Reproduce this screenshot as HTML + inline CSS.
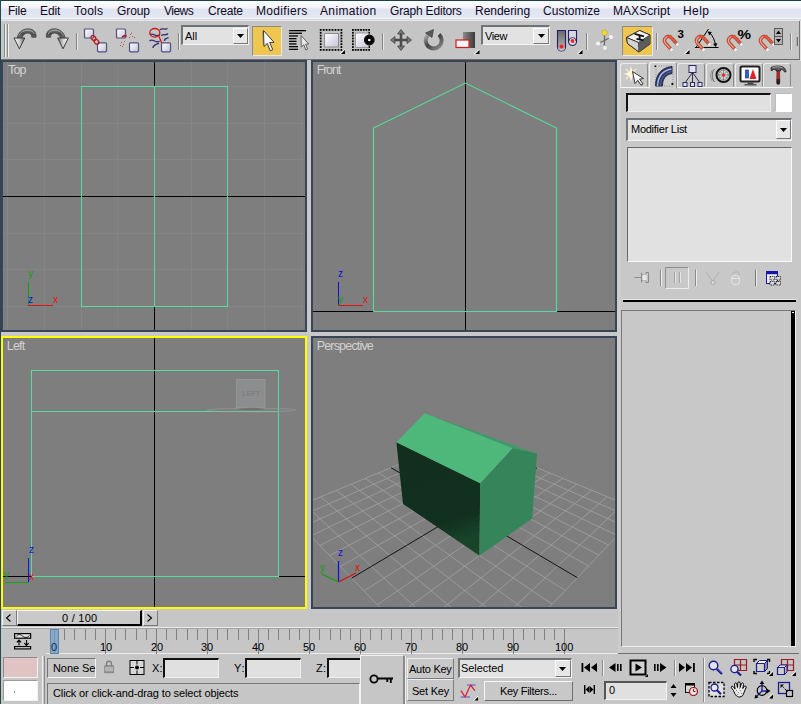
<!DOCTYPE html>
<html lang="en"><head><meta charset="utf-8"><title>Untitled - Autodesk 3ds Max</title>
<style>
html,body{margin:0;padding:0}
body{width:801px;height:704px;position:relative;overflow:hidden;background:#c6c6c6;font-family:"Liberation Sans",sans-serif;font-size:11px;color:#000;line-height:1}
.abs{position:absolute}
div,span{box-sizing:border-box}
#menubar{position:absolute;left:0;top:0;width:801px;height:21px;background:linear-gradient(#1d3f40 0,#1d3f40 1px,#fbfcfe 1px,#f1f3f9 8px,#dfe4f1 9px,#e3e7f3 17px,#eef0f7 18px,#f4f5f9 19px,#b9bcc6 20px,#e4e4e4 21px);}
#menubar span{position:absolute;top:4px;font-size:12px;color:#10081c;white-space:nowrap;line-height:14px}
#edgeL{position:absolute;left:0;top:0;width:1px;height:704px;background:#24484c}
#toolbar{position:absolute;left:1px;top:21px;width:799px;height:39px;background:#c5c5c5;border-right:1px solid #777;border-bottom:1px solid #6a6a6a}
.t{position:absolute;white-space:nowrap;font-size:11px;line-height:13px}
.sunk{position:absolute;background:#e1e1e1;border:1px solid;border-color:#5a5a5a #fff #fff #5a5a5a}
.sunk2{position:absolute;background:#e1e1e1;border:2px solid;border-color:#6b6b6b #f4f4f4 #f4f4f4 #6b6b6b}
.btn{position:absolute;background:#c9c9c9;border:1px solid;border-color:#f6f6f6 #6e6e6e #6e6e6e #f6f6f6}
.vsep{position:absolute;width:2px;border-left:1px solid #8a8a8a;border-right:1px solid #efefef}
.ico{position:absolute;overflow:visible}
.tab{position:absolute;top:63px;width:28px;height:24px;background:#c8c8c8;border:1px solid;border-color:#ececec #8a8a8a #c8c8c8 #ececec;border-radius:3px 3px 0 0}
.tab.act{top:62px;height:27px;background:#cecece;border-color:#f4f4f4 #8a8a8a #cecece #f4f4f4}

#m1{left:7.8px;letter-spacing:-0.25px}
#m2{left:39.8px;letter-spacing:-0.11px}
#m3{left:74.3px;letter-spacing:0.23px}
#m4{left:116.9px;letter-spacing:-0.10px}
#m5{left:164.3px;letter-spacing:-0.51px}
#m6{left:207.4px;letter-spacing:-0.20px}
#m7{left:255.0px;letter-spacing:0.32px}
#m8{left:320.4px;letter-spacing:0.35px}
#m9{left:389.4px;letter-spacing:-0.18px}
#m10{left:474.5px;letter-spacing:-0.04px}
#m11{left:542.4px;letter-spacing:0.03px}
#m12{left:612.0px;letter-spacing:0.05px}
#m13{left:682.3px;letter-spacing:0.45px}
#tall{left:184.8px;letter-spacing:0.00px}
#tview{left:485.4px;letter-spacing:-0.39px}
#tmod{left:629.8px;letter-spacing:-0.26px}
#tframe{left:62.2px;letter-spacing:0.25px}
#tnone{left:52.9px;letter-spacing:-0.07px}
#tX{left:151.5px;letter-spacing:0.04px}
#tY{left:233.3px;letter-spacing:0.79px}
#tZ{left:315.7px;letter-spacing:0.35px}
#tprompt{left:53.0px;letter-spacing:-0.13px}
#tauto{left:409.1px;letter-spacing:-0.26px}
#tset{left:411.8px;letter-spacing:-0.22px}
#tsel{left:461.1px;letter-spacing:-0.06px}
#tkf{left:500.0px;letter-spacing:-0.30px}
#tf0{left:608.4px;letter-spacing:0.00px}
#vTop{letter-spacing:-0.76px;transform:translateX(-0.1px)}
#vFront{letter-spacing:-1.19px;transform:translateX(-1.3px)}
#vLeft{letter-spacing:-0.85px;transform:translateX(-1.2px)}
#vPersp{letter-spacing:-0.82px;transform:translateX(-1.3px)}
</style></head>
<body>
<div id="menubar">
<span id="m1" style="left:8px">File</span><span id="m2" style="left:40px">Edit</span><span id="m3" style="left:74px">Tools</span><span id="m4" style="left:117px">Group</span><span id="m5" style="left:164px">Views</span><span id="m6" style="left:208px">Create</span><span id="m7" style="left:256px">Modifiers</span><span id="m8" style="left:320px">Animation</span><span id="m9" style="left:390px">Graph Editors</span><span id="m10" style="left:475px">Rendering</span><span id="m11" style="left:543px">Customize</span><span id="m12" style="left:613px">MAXScript</span><span id="m13" style="left:683px">Help</span>
</div>
<div id="toolbar"></div>
<div class="abs" style="left:1px;top:20px;width:799px;height:1px;background:#e6e6e6"></div>
<div class="abs" style="left:252px;top:26px;width:30px;height:30px;background:#efc64e;border:1px solid;border-color:#8a8a8a #e8e8e8 #e8e8e8 #8a8a8a"></div>
<div class="abs" style="left:622px;top:26px;width:31px;height:30px;background:#efc64e;border:1px solid;border-color:#8a8a8a #e8e8e8 #e8e8e8 #8a8a8a"></div>
<div class="sunk2" style="left:181px;top:25px;width:68px;height:20px;background:#e2e2e2;border-width:2px 1px 1px 2px;border-color:#6e7478 #f4f4f4 #f4f4f4 #6e7478"></div>
<div class="t" id="tall" style="left:185px;top:30px">All</div>
<div class="btn" style="left:233px;top:28px;width:15px;height:16px;background:#e8e8e8;border-color:#fff #777 #777 #fff"></div>
<svg class="ico" style="left:237px;top:34px" width="7" height="4"><path d="M0 0 H7 L3.500 4 Z" fill="#000"/></svg>
<div class="sunk2" style="left:481px;top:25px;width:69px;height:20px;background:#e2e2e2;border-width:2px 1px 1px 2px;border-color:#6e7478 #f4f4f4 #f4f4f4 #6e7478"></div>
<div class="t" id="tview" style="left:485px;top:30px">View</div>
<div class="btn" style="left:533px;top:28px;width:16px;height:16px;background:#e8e8e8;border-color:#fff #777 #777 #fff"></div>
<svg class="ico" style="left:538px;top:34px" width="7" height="4"><path d="M0 0 H7 L3.500 4 Z" fill="#000"/></svg>
<svg class="ico" style="left:0;top:21px" width="801" height="39" viewBox="0 21 801 39">
<defs>
<linearGradient id="gA" x1="0" y1="0" x2="0" y2="1"><stop offset="0" stop-color="#8a8a8a"/><stop offset="0.5" stop-color="#4a4a4a"/><stop offset="1" stop-color="#6a6a6a"/></linearGradient>
<linearGradient id="gH" x1="0" y1="0" x2="1" y2="0"><stop offset="0" stop-color="#f8f8f8"/><stop offset="0.5" stop-color="#d0d0d0"/><stop offset="1" stop-color="#606060"/></linearGradient>
<linearGradient id="gH2" x1="1" y1="0" x2="0" y2="0"><stop offset="0" stop-color="#f8f8f8"/><stop offset="0.5" stop-color="#d0d0d0"/><stop offset="1" stop-color="#606060"/></linearGradient>
<linearGradient id="gSq" x1="0" y1="0" x2="1" y2="1"><stop offset="0" stop-color="#ffffff"/><stop offset="1" stop-color="#c4c4dc"/></linearGradient>
<linearGradient id="gDk" x1="0" y1="0" x2="1" y2="0"><stop offset="0" stop-color="#8a8a8a"/><stop offset="1" stop-color="#3a3a3a"/></linearGradient>
<linearGradient id="gPv" x1="0" y1="0" x2="0" y2="1"><stop offset="0" stop-color="#6a6a6a"/><stop offset="1" stop-color="#b8b8b8"/></linearGradient>
<linearGradient id="gRot" x1="0" y1="0" x2="1" y2="1"><stop offset="0" stop-color="#b0b0b0"/><stop offset="0.45" stop-color="#404040"/><stop offset="1" stop-color="#909090"/></linearGradient>
<g id="sq"><rect x="0.5" y="0.5" width="9" height="9" rx="1" fill="url(#gSq)" stroke="#50507c" stroke-width="1.2"/></g>
<g id="mag">
 <path d="M-5.400 8 V0 A5.400 5.400 0 0 1 5.400 0 V8 H2.600 V0 A2.600 2.600 0 0 0 -2.600 0 V8 Z" fill="#e4583a" stroke="#a03a28" stroke-width="0.700"/>
 <path d="M-4.100 6 V0 A4.100 4.100 0 0 1 1.500 -3.800" fill="none" stroke="#f6a48c" stroke-width="1.100"/>
 <rect x="-5.500" y="7.600" width="3.100" height="2.600" fill="#fff" stroke="#999" stroke-width="0.400"/><rect x="2.400" y="7.600" width="3.100" height="2.600" fill="#fff" stroke="#999" stroke-width="0.400"/>
</g>
<g id="fly"><path d="M0 4 H4 V0 Z" fill="#000"/><path d="M-1.200 4 L3.500 -0.700" stroke="#fff" stroke-width="0.900"/></g>
<g id="vs"><rect x="0" y="0" width="1" height="17" fill="#848484"/><rect x="1" y="0" width="1" height="17" fill="#e8e8e8"/></g>
</defs>
<rect x="4" y="24" width="1" height="33" fill="#8a8a8a"/><rect x="5" y="24" width="1" height="33" fill="#efefef"/><rect x="7" y="24" width="1" height="33" fill="#8a8a8a"/><rect x="8" y="24" width="1" height="33" fill="#efefef"/>
<g><path d="M36 37.300 C36.800 31 32 28.600 27.500 28.800 C22 29.100 17.800 33 17.200 38.500 L22 38.500 C22.500 35.500 24.500 33.300 27.500 33.100 C30.500 33 31.800 34.800 31.800 37.300 Z" fill="url(#gA)" stroke="#3c3c3c" stroke-width="0.700"/><path d="M19 35.500 C20.500 32 23.500 30.300 27.500 30.300 C31 30.300 33.500 31.500 34.300 34" fill="none" stroke="#a4a4a4" stroke-width="1"/><path d="M14 38 L24.800 38 L19.400 48.800 Z" fill="url(#gH)" stroke="#3c3c3c" stroke-width="1" stroke-linejoin="round"/></g>
<g transform="translate(82.400 0) scale(-1 1)"><path d="M36 37.300 C36.800 31 32 28.600 27.500 28.800 C22 29.100 17.800 33 17.200 38.500 L22 38.500 C22.500 35.500 24.500 33.300 27.500 33.100 C30.500 33 31.800 34.800 31.800 37.300 Z" fill="url(#gA)" stroke="#3c3c3c" stroke-width="0.700"/><path d="M19 35.500 C20.500 32 23.500 30.300 27.500 30.300 C31 30.300 33.500 31.500 34.300 34" fill="none" stroke="#a4a4a4" stroke-width="1"/><path d="M14 38 L24.800 38 L19.400 48.800 Z" fill="url(#gH)" stroke="#3c3c3c" stroke-width="1" stroke-linejoin="round"/></g>
<use href="#vs" x="76" y="33"/>
<use href="#sq" x="84" y="28.500"/><use href="#sq" x="97" y="42.300"/>
<g fill="none" stroke="#c01820" stroke-width="1.300"><ellipse cx="93.500" cy="38" rx="2" ry="2.800" transform="rotate(-40 93.500 38)"/><ellipse cx="96.500" cy="41.800" rx="2" ry="2.800" transform="rotate(-40 96.500 41.800)"/></g>
<use href="#sq" x="116" y="28.500"/><use href="#sq" x="129" y="42.300"/>
<path d="M122.500 37.500 A2.300 2.300 0 0 1 126.500 36.500" fill="none" stroke="#b01820" stroke-width="1.800"/>
<g fill="#c05050"><rect x="130" y="34" width="1" height="1"/><rect x="132" y="36" width="1" height="1"/><rect x="129" y="37" width="1" height="1"/><rect x="134" y="37" width="1" height="1"/><rect x="131" y="32.500" width="1" height="1"/><rect x="121" y="42" width="1" height="1"/><rect x="123" y="44" width="1" height="1"/><rect x="120" y="45" width="1" height="1"/><rect x="124" y="41" width="1" height="1"/><rect x="122" y="46" width="1" height="1"/></g>
<g fill="none" stroke="#303070" stroke-width="1.300"><path d="M150 35 C153 31.500 156 38.500 160 34.500"/><path d="M149.500 41 C153 37.500 156 44.500 159.500 41"/><path d="M153 48 C153 44 157 45 159 43"/><path d="M160 30 C161 27 165 30.500 167.500 28.500"/><path d="M161.500 36 C162 33 165.500 36.500 168 33.500"/><path d="M164.500 41 C164 38 167 39 168.500 37.500"/></g>
<ellipse cx="154.800" cy="32.800" rx="5" ry="4.300" fill="none" stroke="#d01818" stroke-width="1.300"/><path d="M158.500 35.500 C160 38 160.500 41 162 43.500" fill="none" stroke="#d01818" stroke-width="1.300"/>
<use href="#sq" x="161" y="42.300"/>
<use href="#vs" x="178" y="33"/>
<path d="M262.300 31 L262.800 45 L265 43.500 L263.500 31.500 Z" fill="#777" opacity="0.800"/>
<path d="M263.500 30.500 L264 46.500 L267.300 43.300 L270.200 50.800 L272.800 49.700 L269.700 42.500 L274 42.300 Z" fill="#fff" stroke="#3a3a3a" stroke-width="1" stroke-linejoin="round"/>
<rect x="289" y="30" width="17" height="1.300" fill="#000"/>
<rect x="289" y="32.6" width="13" height="1.300" fill="#000"/>
<rect x="289" y="35.3" width="9" height="1.300" fill="#000"/>
<rect x="289" y="38" width="7.5" height="1.300" fill="#000"/>
<rect x="289" y="40.7" width="7.5" height="1.300" fill="#000"/>
<rect x="289" y="43.3" width="7.5" height="1.300" fill="#000"/>
<rect x="289" y="46" width="9" height="1.300" fill="#000"/>
<rect x="289" y="48.7" width="9" height="1.300" fill="#000"/>
<path d="M301 35.500 L301.300 47 L303.800 44.800 L305.800 50 L307.600 49.200 L305.600 44.200 L308.800 44 Z" fill="#e8e8e8" stroke="#555" stroke-width="0.900" stroke-linejoin="round"/>
<g fill="#000"><rect x="319.80" y="29.00" width="1.8" height="1.8"/><rect x="319.80" y="49.00" width="1.8" height="1.8"/><rect x="322.76" y="29.00" width="1.8" height="1.8"/><rect x="322.76" y="49.00" width="1.8" height="1.8"/><rect x="325.71" y="29.00" width="1.8" height="1.8"/><rect x="325.71" y="49.00" width="1.8" height="1.8"/><rect x="328.67" y="29.00" width="1.8" height="1.8"/><rect x="328.67" y="49.00" width="1.8" height="1.8"/><rect x="331.63" y="29.00" width="1.8" height="1.8"/><rect x="331.63" y="49.00" width="1.8" height="1.8"/><rect x="334.59" y="29.00" width="1.8" height="1.8"/><rect x="334.59" y="49.00" width="1.8" height="1.8"/><rect x="337.54" y="29.00" width="1.8" height="1.8"/><rect x="337.54" y="49.00" width="1.8" height="1.8"/><rect x="340.50" y="29.00" width="1.8" height="1.8"/><rect x="340.50" y="49.00" width="1.8" height="1.8"/><rect x="319.80" y="31.86" width="1.8" height="1.8"/><rect x="340.50" y="31.86" width="1.8" height="1.8"/><rect x="319.80" y="34.71" width="1.8" height="1.8"/><rect x="340.50" y="34.71" width="1.8" height="1.8"/><rect x="319.80" y="37.57" width="1.8" height="1.8"/><rect x="340.50" y="37.57" width="1.8" height="1.8"/><rect x="319.80" y="40.43" width="1.8" height="1.8"/><rect x="340.50" y="40.43" width="1.8" height="1.8"/><rect x="319.80" y="43.29" width="1.8" height="1.8"/><rect x="340.50" y="43.29" width="1.8" height="1.8"/><rect x="319.80" y="46.14" width="1.8" height="1.8"/><rect x="340.50" y="46.14" width="1.8" height="1.8"/></g>
<rect x="324.500" y="33.500" width="14" height="13.500" fill="url(#gSq)" stroke="#8a8a8a" stroke-width="1"/>
<use href="#fly" x="341" y="50"/>
<g fill="#000"><rect x="352.00" y="29.00" width="1.8" height="1.8"/><rect x="352.00" y="49.00" width="1.8" height="1.8"/><rect x="354.70" y="29.00" width="1.8" height="1.8"/><rect x="354.70" y="49.00" width="1.8" height="1.8"/><rect x="357.40" y="29.00" width="1.8" height="1.8"/><rect x="357.40" y="49.00" width="1.8" height="1.8"/><rect x="360.10" y="29.00" width="1.8" height="1.8"/><rect x="360.10" y="49.00" width="1.8" height="1.8"/><rect x="362.80" y="29.00" width="1.8" height="1.8"/><rect x="362.80" y="49.00" width="1.8" height="1.8"/><rect x="365.50" y="29.00" width="1.8" height="1.8"/><rect x="365.50" y="49.00" width="1.8" height="1.8"/><rect x="368.20" y="29.00" width="1.8" height="1.8"/><rect x="368.20" y="49.00" width="1.8" height="1.8"/><rect x="352.00" y="31.86" width="1.8" height="1.8"/><rect x="368.20" y="31.86" width="1.8" height="1.8"/><rect x="352.00" y="34.71" width="1.8" height="1.8"/><rect x="368.20" y="34.71" width="1.8" height="1.8"/><rect x="352.00" y="37.57" width="1.8" height="1.8"/><rect x="368.20" y="37.57" width="1.8" height="1.8"/><rect x="352.00" y="40.43" width="1.8" height="1.8"/><rect x="368.20" y="40.43" width="1.8" height="1.8"/><rect x="352.00" y="43.29" width="1.8" height="1.8"/><rect x="368.20" y="43.29" width="1.8" height="1.8"/><rect x="352.00" y="46.14" width="1.8" height="1.8"/><rect x="368.20" y="46.14" width="1.8" height="1.8"/></g>
<rect x="355.500" y="33" width="13" height="14.500" fill="url(#gSq)" stroke="#8a8a8a" stroke-width="0.800"/>
<circle cx="369.300" cy="40" r="4.600" fill="#000" stroke="#111" stroke-width="1.600"/><circle cx="369.300" cy="40" r="1.300" fill="#fff"/>
<use href="#vs" x="382" y="33"/>
<g fill="#787878" stroke="#454545" stroke-width="0.800"><path d="M401 29.500 L404.500 34 H397.500 Z M401 50.500 L404.500 46 H397.500 Z M390.500 40 L395 36.500 V43.500 Z M411.500 40 L407 36.500 V43.500 Z"/></g><path d="M401 33.500 V46.500 M394.500 40 H407.500" stroke="#4c4c4c" stroke-width="2.600"/>
<path d="M428 34.800 A8 8 0 1 0 439 34.500" fill="none" stroke="url(#gRot)" stroke-width="4"/>
<path d="M425.500 33 L433.500 29.500 L432 37.500 Z" fill="#5a5a5a" stroke="#333" stroke-width="0.600"/>
<rect x="463" y="32" width="12" height="16" fill="url(#gDk)"/>
<rect x="456" y="40" width="13" height="7.500" fill="#f4f4fa" stroke="#d81818" stroke-width="1.200"/>
<use href="#fly" x="475.500" y="50"/>
<path d="M557.500 30.500 H565.500 V47 A4 4 0 0 1 557.500 47 Z" fill="url(#gPv)" stroke="#20206c" stroke-width="1.100"/><circle cx="561.500" cy="46.500" r="2" fill="#ff2020"/>
<path d="M558 48.500 A4.300 4.300 0 0 0 565 48.500" fill="none" stroke="#e8e8e8" stroke-width="0.800"/>
<path d="M568.500 30.500 H576.500 V41.500 A4 4 0 0 1 568.500 41.500 Z" fill="#d8d8e0" stroke="#20206c" stroke-width="1.100"/><path d="M569 41 A3.500 3.500 0 0 1 576 41" fill="none" stroke="#20206c" stroke-width="0.800"/><circle cx="572.500" cy="41" r="1.900" fill="#ff2020"/>
<use href="#fly" x="578.500" y="50"/>
<use href="#vs" x="586" y="33"/>
<path d="M604.500 33 V47.500 M611 37 L604.500 40.500 L598 43.500" stroke="#666" stroke-width="1.200" fill="none"/>
<circle cx="604.500" cy="32.800" r="2.700" fill="#f0d838" stroke="#b8a020" stroke-width="0.500"/><circle cx="611" cy="37" r="2.500" fill="#f4f4f4" stroke="#aaa" stroke-width="0.500"/><circle cx="598" cy="43.500" r="2.500" fill="#f4f4f4" stroke="#aaa" stroke-width="0.500"/><circle cx="605" cy="48" r="2.500" fill="#f0f0f0" stroke="#aaa" stroke-width="0.500"/>
<path d="M626.500 37.500 L639.500 30.500 L650 35 L650 44 L639 52 L627.500 43.500 Z" fill="#555" stroke="#222" stroke-width="1"/>
<path d="M626.500 37.500 L639.500 30.500 L650 35 L638.500 42.500 Z" fill="#f4f4f4" stroke="#222" stroke-width="0.800"/>
<path d="M626.500 37.500 L638.500 42.500 L639 52 L627.500 43.500 Z" fill="#d4d4d4" stroke="#222" stroke-width="0.800"/>
<path d="M638.500 42.500 L650 35 L650 44 L639 52 Z" fill="#5c5c5c"/>
<path d="M634.500 33.800 L644 36.300 M639.300 35 L640 39.500 M636.500 38.800 L643.500 40.300" stroke="#111" stroke-width="1.800" fill="none"/>
<use href="#vs" x="656" y="33"/>
<use href="#mag" transform="translate(668.500 40.500) rotate(-42)"/>
<text x="677.500" y="37.500" font-family="Liberation Sans, sans-serif" font-weight="bold" font-size="11.500" fill="#000">3</text>
<use href="#fly" x="685.500" y="50"/>
<path d="M695 47.500 H718.500 M696 47.500 L708.500 29" stroke="#000" stroke-width="1" fill="none"/><path d="M709.500 32.500 C713 36 715 41 715.500 45.500" stroke="#000" stroke-width="1" fill="none"/><path d="M707.500 31.500 L711.800 32 L709.500 35.500 Z M715.800 47.300 L713 43.800 L717.300 43.300 Z" fill="#000"/>
<use href="#mag" transform="translate(700.500 40.500) rotate(-42)"/>
<use href="#mag" transform="translate(732.500 40.500) rotate(-42)"/>
<text x="737.500" y="38.800" font-family="Liberation Sans, sans-serif" font-weight="bold" font-size="13.500" fill="#000" textLength="13.500" lengthAdjust="spacingAndGlyphs">%</text>
<use href="#mag" transform="translate(764.500 40.500) rotate(-42)"/>
<rect x="774" y="28" width="9" height="17" fill="#5a5a5a"/><rect x="775" y="29" width="7" height="7" fill="#b4b4b4"/><rect x="775" y="37" width="7" height="7" fill="#b4b4b4"/><path d="M778.500 30.500 L781 34 H776 Z M778.500 42.500 L781 39 H776 Z" fill="#000"/>
<use href="#vs" x="790" y="33"/>
<path d="M797.300 37 V46" stroke="#555" stroke-width="1"/>
</svg>
<div id="edgeL"></div>
<svg class="abs" id="viewports" style="left:0;top:59px" width="619" height="551" viewBox="0 59 619 551" shape-rendering="crispEdges">
<rect x="0" y="59" width="619" height="551" fill="#c8c8c8"/>
<rect x="0" y="59" width="1" height="551" fill="#2b4650"/>
<rect x="1" y="59" width="618" height="1" fill="#707070"/>
<rect x="1" y="60" width="306" height="272" fill="#384557"/>
<rect x="3" y="62" width="302" height="268" fill="#7e7e7e"/>
<rect x="311" y="60" width="306" height="272" fill="#384557"/>
<rect x="313" y="62" width="302" height="268" fill="#7e7e7e"/>
<rect x="1" y="336" width="306" height="273" fill="#ffff00"/>
<rect x="3" y="338" width="302" height="269" fill="#7e7e7e"/>
<rect x="311" y="336" width="306" height="273" fill="#384557"/>
<rect x="313" y="338" width="302" height="269" fill="#7e7e7e"/>
<rect x="7" y="62" width="1" height="268" fill="#858585"/>
<rect x="44" y="62" width="1" height="268" fill="#858585"/>
<rect x="81" y="62" width="1" height="268" fill="#858585"/>
<rect x="117" y="62" width="1" height="268" fill="#858585"/>
<rect x="191" y="62" width="1" height="268" fill="#858585"/>
<rect x="227" y="62" width="1" height="268" fill="#858585"/>
<rect x="264" y="62" width="1" height="268" fill="#858585"/>
<rect x="301" y="62" width="1" height="268" fill="#858585"/>
<rect x="3" y="86" width="302" height="1" fill="#858585"/>
<rect x="3" y="123" width="302" height="1" fill="#858585"/>
<rect x="3" y="159" width="302" height="1" fill="#858585"/>
<rect x="3" y="233" width="302" height="1" fill="#858585"/>
<rect x="3" y="269" width="302" height="1" fill="#858585"/>
<rect x="3" y="306" width="302" height="1" fill="#858585"/>
<rect x="3" y="196" width="302" height="1" fill="#000"/>
<rect x="154" y="62" width="1" height="268" fill="#000"/>
<rect x="81.5" y="86.5" width="146" height="220" fill="none" stroke="#56dd9c" stroke-width="1"/>
<rect x="154" y="86" width="1" height="221" fill="#56dd9c"/>
<rect x="313" y="311" width="302" height="1" fill="#000"/>
<rect x="465" y="62" width="1" height="268" fill="#000"/>
<polyline points="373.5,311.5 373.5,128 465.5,83 556.5,128 556.5,311.5 373.5,311.5" fill="none" stroke="#56dd9c" stroke-width="1.1" shape-rendering="auto"/>
<rect x="3" y="576" width="302" height="1" fill="#000"/>
<rect x="154" y="338" width="1" height="269" fill="#000"/>
<rect x="31.5" y="370.5" width="247" height="206" fill="none" stroke="#56dd9c" stroke-width="1"/>
<rect x="31" y="411" width="248" height="1" fill="#56dd9c"/>
<g shape-rendering="auto"><ellipse cx="251.5" cy="410" rx="45" ry="1.8" fill="none" stroke="#9c9c9c" stroke-width="1.1" opacity="0.55"/><rect x="236.5" y="379.5" width="28.5" height="28" fill="#8b8d8f" stroke="#929496" stroke-width="1"/><ellipse cx="251" cy="409" rx="13" ry="1.2" fill="#6a6a6a" opacity="0.7"/><text x="251" y="396" font-family="Liberation Sans, sans-serif" font-size="7" fill="#7d7f81" text-anchor="middle" font-weight="bold">LEFT</text></g>
<defs><clipPath id="pclip"><rect x="313" y="338" width="302" height="269"/></clipPath><linearGradient id="darkwall" x1="0" y1="0" x2="0.25" y2="1"><stop offset="0" stop-color="#112e1e"/><stop offset="0.8" stop-color="#12301f"/><stop offset="1" stop-color="#184429"/></linearGradient></defs>
<g clip-path="url(#pclip)"><g shape-rendering="auto" stroke="#9f9f9f" stroke-width="0.85" fill="none"><line x1="465.4" y1="695.3" x2="286.4" y2="511.1"/><line x1="465.4" y1="695.3" x2="641.1" y2="510.8"/><line x1="486.4" y1="673.3" x2="304.0" y2="503.8"/><line x1="444.2" y1="673.5" x2="623.6" y2="503.6"/><line x1="505.3" y1="653.5" x2="320.6" y2="496.9"/><line x1="425.1" y1="653.8" x2="607.1" y2="496.8"/><line x1="522.4" y1="635.5" x2="336.3" y2="490.4"/><line x1="407.7" y1="635.9" x2="591.5" y2="490.3"/><line x1="538.0" y1="619.1" x2="351.1" y2="484.3"/><line x1="391.8" y1="619.6" x2="576.8" y2="484.2"/><line x1="552.2" y1="604.1" x2="365.1" y2="478.4"/><line x1="377.3" y1="604.6" x2="562.8" y2="478.4"/><line x1="565.3" y1="590.4" x2="378.4" y2="472.9"/><line x1="363.9" y1="590.9" x2="549.6" y2="472.9"/><line x1="588.6" y1="566.0" x2="403.0" y2="462.7"/><line x1="340.2" y1="566.5" x2="525.0" y2="462.7"/><line x1="598.9" y1="555.1" x2="414.4" y2="458.0"/><line x1="329.6" y1="555.6" x2="513.6" y2="458.0"/><line x1="608.5" y1="545.0" x2="425.2" y2="453.5"/><line x1="319.8" y1="545.5" x2="502.8" y2="453.5"/><line x1="617.5" y1="535.6" x2="435.6" y2="449.2"/><line x1="310.6" y1="536.0" x2="492.4" y2="449.2"/><line x1="625.9" y1="526.8" x2="445.4" y2="445.1"/><line x1="302.0" y1="527.2" x2="482.5" y2="445.1"/><line x1="633.7" y1="518.6" x2="454.9" y2="441.2"/><line x1="293.9" y1="518.9" x2="473.0" y2="441.2"/><line x1="641.1" y1="510.8" x2="463.9" y2="437.4"/><line x1="286.4" y1="511.1" x2="463.9" y2="437.4"/><line x1="577.4" y1="577.7" x2="391.0" y2="467.7" stroke="#000"/><line x1="351.6" y1="578.2" x2="537.0" y2="467.7" stroke="#000"/></g>
<g shape-rendering="auto">
<polygon points="424.7,413.3 537,453.6 512.4,448.3" fill="#3e9a68"/>
<polygon points="396.4,442.3 480.2,483.3 479.5,555.8 403,503.9" fill="url(#darkwall)"/>
<polygon points="480.2,483.3 512.4,448.3 537,453.6 532.2,518.4 479.5,555.8" fill="#36855a"/>
<polygon points="424.7,413.3 396.4,442.3 480.2,483.3 512.4,448.3" fill="#4eb87b"/>
</g></g>
<rect x="28" y="282" width="1" height="24" fill="#10a010"/><rect x="28" y="305" width="25" height="1" fill="#e01010"/>
<g shape-rendering="auto"><text x="28" y="277" font-family="Liberation Sans, sans-serif" font-size="10" fill="#10a010" >y</text><text x="28" y="303" font-family="Liberation Sans, sans-serif" font-size="10" fill="#1010e0" >z</text><text x="53" y="303" font-family="Liberation Sans, sans-serif" font-size="10" fill="#e01010" >x</text></g>
<rect x="338" y="282" width="1" height="24" fill="#1010e0"/><rect x="338" y="305" width="25" height="1" fill="#e01010"/>
<g shape-rendering="auto"><text x="338" y="277" font-family="Liberation Sans, sans-serif" font-size="10" fill="#1010e0" >z</text><text x="338" y="303" font-family="Liberation Sans, sans-serif" font-size="10" fill="#10a010" >y</text><text x="363" y="303" font-family="Liberation Sans, sans-serif" font-size="10" fill="#e01010" >x</text></g>
<rect x="28" y="558" width="1" height="24" fill="#1010e0"/><rect x="5" y="582" width="24" height="1" fill="#10a010"/>
<g shape-rendering="auto"><text x="29" y="553" font-family="Liberation Sans, sans-serif" font-size="10" fill="#1010e0" >z</text><text x="4" y="578" font-family="Liberation Sans, sans-serif" font-size="10" fill="#10a010" >y</text><text x="29" y="580" font-family="Liberation Sans, sans-serif" font-size="10" fill="#e01010" >x</text></g>
<g shape-rendering="auto" stroke-width="1.2"><line x1="338.5" y1="561" x2="338.5" y2="582" stroke="#1010e0"/><line x1="338.5" y1="582" x2="356" y2="573" stroke="#e01010"/><line x1="338.5" y1="582" x2="322" y2="574" stroke="#10a010"/><text x="338" y="556" font-family="Liberation Sans, sans-serif" font-size="10" fill="#1010e0" >z</text><text x="320" y="571" font-family="Liberation Sans, sans-serif" font-size="10" fill="#10a010" >y</text><text x="355" y="571" font-family="Liberation Sans, sans-serif" font-size="10" fill="#e01010" >x</text></g>
<g shape-rendering="auto"><text x="8" y="74" font-family="Liberation Sans, sans-serif" font-size="12.5" fill="#d2d2d2"  id="vTop">Top</text><text x="318" y="74" font-family="Liberation Sans, sans-serif" font-size="12.5" fill="#d2d2d2"  id="vFront">Front</text><text x="8" y="350" font-family="Liberation Sans, sans-serif" font-size="12.5" fill="#d2d2d2"  id="vLeft">Left</text><text x="318" y="350" font-family="Liberation Sans, sans-serif" font-size="12.5" fill="#d2d2d2"  id="vPersp">Perspective</text></g>
</svg>
<div id="cmdpanel" class="abs" style="left:617px;top:60px;width:184px;height:594px;background:#c8c8c8"></div>
<div class="abs" style="left:617px;top:60px;width:4px;height:594px;background:#cdcdcd"></div>
<div class="abs" style="left:800px;top:21px;width:1px;height:40px;background:#e0e0e0"></div>
<!-- tabs -->
<div class="abs" style="left:620px;top:87px;width:173px;height:1px;background:#f4f4f4"></div>
<div class="tab" style="left:620px"></div>
<div class="tab act" style="left:649px"></div>
<div class="tab" style="left:677px"></div>
<div class="tab" style="left:706px"></div>
<div class="tab" style="left:735px"></div>
<div class="tab" style="left:763px"></div>
<svg class="ico" style="left:620px;top:62px" width="173" height="26" viewBox="620 62 173 26">
 <!-- create: star + arrow -->
 <g>
  <path d="M631 66 L632.5 72 L638 74 L632.5 76 L631 82 L629.5 76 L624 74 L629.5 72 Z" fill="#fffbe0" opacity="0.95"/>
  <path d="M626 69 L636 79 M636 69 L626 79" stroke="#fff8d0" stroke-width="1.2" opacity="0.8"/>
  <circle cx="631" cy="74" r="2.5" fill="#fffad0"/>
  <path d="M632.5 71.5 L643.5 78.5 L639.5 79.2 L643 84 L641 85.3 L637.8 80.3 L635 83.5 Z" fill="#fff" stroke="#303030" stroke-width="1" stroke-linejoin="round"/>
 </g>
 <!-- modify: pipe -->
 <g>
  <path d="M656 66 h17 v20 h-17 z" fill="none" stroke="#555" stroke-width="0.6" stroke-dasharray="1 1.5"/>
  <path d="M657 88 C657 76 663 70 672 69" fill="none" stroke="#1d2748" stroke-width="0" />
  <path d="M655.5 86 C655.5 75 661 67.5 672 66.5 L672 73.5 C666 74.5 662.5 78.5 662.5 86 Z" fill="#303a62" stroke="#151c38" stroke-width="0.8"/>
  <path d="M657.5 86 C658 77 662 70.5 671.5 69" fill="none" stroke="#a8b8e8" stroke-width="1.6"/>
  <path d="M660.3 86 C660.8 79 664 73 671.8 71.6" fill="none" stroke="#5868a8" stroke-width="1"/>
  <rect x="654.5" y="65.5" width="1.5" height="1.5" fill="#000"/><rect x="671.5" y="83" width="1.8" height="1.8" fill="#000"/>
 </g>
 <!-- hierarchy -->
 <g stroke="#2c2c60" stroke-width="1" fill="#e0e0f4">
  <path d="M692.500 72 V83 M692 73 L685 83 M693 73 L700 83" fill="none" stroke="#202040" stroke-width="0.9"/>
  <rect x="689" y="65.500" width="7" height="7"/>
  <rect x="683" y="82.500" width="4" height="4"/>
  <rect x="690.500" y="82.500" width="4" height="4"/>
  <rect x="698" y="82.500" width="4" height="4"/>
 </g>
 <!-- motion wheel -->
 <g fill="none">
  <path d="M714.500 69 C711.500 72 711.500 79 714.500 82" stroke="#666" stroke-width="1"/>
  <path d="M712.300 70 C710 73 710 78 712.300 81" stroke="#888" stroke-width="0.8"/>
  <circle cx="723.500" cy="75" r="7" stroke="#111" stroke-width="2" fill="#d8d8d8"/>
  <circle cx="723.500" cy="75" r="4.800" stroke="#777" stroke-width="0.7"/>
  <path d="M723.500 69.500 V80.500 M718 75 H729 M719.600 71.100 L727.400 78.900 M727.400 71.100 L719.600 78.900" stroke="#666" stroke-width="0.7"/>
  <circle cx="723.500" cy="75" r="1.600" fill="#ff2020"/>
 </g>
 <!-- display monitor -->
 <g>
  <rect x="740.500" y="66.500" width="19" height="15" rx="1.500" fill="#fff" stroke="#222" stroke-width="2"/>
  <rect x="745.500" y="70" width="3" height="8" fill="#3060d0" stroke="#102070" stroke-width="0.600"/>
  <path d="M753 69 L756.500 79 H749.500 Z" fill="#e82020"/>
  <rect x="747.500" y="82.500" width="6" height="2" fill="#444"/><rect x="744.500" y="84" width="12" height="1.500" fill="#555"/>
 </g>
 <!-- hammer -->
 <g>
  <path d="M771 67.500 C774 65.500 780 65.500 783 67 C785 68 786 70 786 72 L784.500 72 C784 70 782.500 69.500 780.500 69.500 L780.500 71 L776 71 L776 69.500 L772.500 69.500 L772.500 70.500 L771 70.500 Z" fill="#5a5a5a" stroke="#1a1a1a" stroke-width="0.700"/>
  <path d="M772.500 67.800 C775 66.500 780 66.500 782.500 67.800" fill="none" stroke="#b0b0b0" stroke-width="0.900"/>
  <path d="M777 71 L779.500 71 L779.800 83 C779.800 84.500 776.700 84.500 776.700 83 Z" fill="#c02820" stroke="#401010" stroke-width="0.600"/>
  <path d="M776.900 79 L779.700 79 L779.800 83.500 C779.800 84.800 776.700 84.800 776.700 83.500 Z" fill="#222"/>
 </g>
</svg>
<!-- name field + swatch -->
<div class="sunk2" style="left:626px;top:93px;width:145px;height:19px;border-color:#111 #f0f0f0 #f0f0f0 #111;border-width:2px 1px 1px 2px;background:#e0e0e0"></div>
<div class="abs" style="left:775px;top:93px;width:17px;height:19px;background:#fff;border:1px solid;border-color:#bbb #fff #fff #bbb"></div>
<!-- modifier list -->
<div class="sunk2" style="left:626px;top:118px;width:166px;height:23px;background:#e2e2e2;border-width:2px 1px 1px 2px;border-color:#6e7478 #f4f4f4 #f4f4f4 #6e7478"></div>
<div class="t" id="tmod" style="left:631px;top:123px">Modifier List</div>
<div class="btn" style="left:776px;top:120px;width:15px;height:19px;background:#e6e6e6;border-color:#fff #777 #777 #fff"></div>
<svg class="ico" style="left:780px;top:128px" width="7" height="4"><path d="M0 0 H7 L3.500 4 Z" fill="#000"/></svg>
<!-- stack list -->
<div class="abs" style="left:627px;top:147px;width:165px;height:115px;background:#e1e1e1;border:1px solid;border-color:#666 #fafafa #fafafa #666"></div>
<!-- stack buttons -->
<svg class="ico" style="left:630px;top:266px" width="160" height="24" viewBox="630 266 160 24">
 <g stroke="#8c8c8c" fill="none" stroke-width="1">
  <path d="M634.500 277.500 H641" /><path d="M641.500 272.500 V282.500 M641.500 274.500 H646 V272.500 H648.500 V282.500 H646 V280.500 H641.500" stroke="#8a8a8a"/>
  <rect x="642.5" y="274.500" width="4" height="6" fill="#e8e8e8" stroke="none"/>
  <path d="M660.500 269.500 V286" stroke="#8a8a8a"/><path d="M661.500 269.500 V286" stroke="#eee"/>
  <path d="M665.500 288.500 V267.500 H688.500" stroke="#8e8e8e"/><path d="M665.500 288.500 H688.500 V267.500" stroke="#ececec"/>
  <path d="M674.500 272 V283 M679.500 272 V283" stroke="#a4a4a4"/><path d="M675.500 272 V283 M680.500 272 V283" stroke="#e6e6e6"/>
  <path d="M695.500 269.500 V286" stroke="#8a8a8a"/><path d="M696.500 269.500 V286" stroke="#eee"/>
  <path d="M706.500 272.500 L712.500 281 L719 272.500" stroke="#a0a0a0" stroke-dasharray="1.500 1"/><circle cx="713" cy="282.500" r="2" stroke="#a8a8a8" fill="#ddd"/>
  <path d="M732 274.500 C734 271 739 271 739.500 275" stroke="#b0b0b0"/><rect x="731.500" y="275.500" width="8" height="9" rx="3" stroke="#e4e4e4" fill="#c8c8c8"/><path d="M731.500 278.500 H739.500" stroke="#e4e4e4"/>
  <path d="M755.500 269.500 V286" stroke="#777"/><path d="M756.500 269.500 V286" stroke="#eee"/>
 </g>
 <g>
  <rect x="766.500" y="271.500" width="11" height="12" fill="#ececf4" stroke="#1818a8" stroke-width="1"/>
  <rect x="766" y="271" width="12" height="3.200" fill="#1414a8"/>
  <g fill="#dcdcdc" stroke="#111" stroke-width="0.900" stroke-dasharray="1.200 0.900"><rect x="770" y="276.500" width="4.500" height="3.500"/><rect x="776" y="276.500" width="4.500" height="3.500"/><rect x="770" y="281.500" width="4.500" height="3.500"/><rect x="776" y="281.500" width="4.500" height="3.500"/></g>
 </g>
</svg>
<!-- divider -->
<div class="abs" style="left:622px;top:299px;width:175px;height:1px;background:#e6e6e6"></div>
<div class="abs" style="left:623px;top:300px;width:173px;height:2px;background:#000"></div>
<!-- rollout area -->
<div class="abs" style="left:621px;top:310px;width:175px;height:337px;background:#c8c8c8;border:1px solid;border-color:#777 #eee #eee #777"></div>
<div class="abs" style="left:791px;top:311px;width:4px;height:335px;background:#000"></div>
<div class="abs" style="left:792px;top:312px;width:2px;height:1px;background:#fff"></div>
<div id="bottom" class="abs" style="left:1px;top:609px;width:617px;height:95px;background:#c6c6c6"></div>
<div class="abs" style="left:618px;top:654px;width:183px;height:50px;background:#c6c6c6"></div>
<div class="btn" style="left:2px;top:610px;width:15px;height:16px;background:#c8c8c8;border-color:#f0f0f0 #7a7a7a #7a7a7a #f0f0f0"></div>
<div class="abs" style="left:17px;top:610px;width:125px;height:16px;background:#c9c9c9;border:solid;border-width:1px 2px 2px 1px;border-color:#f4f4f4 #000 #000 #f4f4f4"></div>
<div class="btn" style="left:143px;top:610px;width:15px;height:16px;background:#c8c8c8;border-color:#f0f0f0 #7a7a7a #7a7a7a #f0f0f0"></div>
<svg class="ico" style="left:2px;top:609px" width="160" height="17" viewBox="2 609 160 17"><path d="M10.500 614.500 L6.500 618 L10.500 621.500" fill="none" stroke="#000" stroke-width="1.100"/><path d="M147.500 614.500 L151.500 618 L147.500 621.500" fill="none" stroke="#000" stroke-width="1.100"/></svg>
<div class="t" id="tframe" style="left:62px;top:612px">0 / 100</div>
<div class="abs" style="left:1px;top:627px;width:617px;height:1px;background:#e8e8e8"></div>
<div class="abs" style="left:1px;top:628px;width:617px;height:1px;background:#a4a4a4"></div>
<div class="abs" style="left:46px;top:653px;width:572px;height:1px;background:#ececec"></div>
<svg class="ico" style="left:0;top:628px" width="618" height="27" viewBox="0 628 618 27" shape-rendering="crispEdges"><rect x="54" y="629" width="1" height="25" fill="#808080"/><rect x="64" y="629" width="1" height="11" fill="#808080"/><rect x="74" y="629" width="1" height="11" fill="#808080"/><rect x="85" y="629" width="1" height="11" fill="#808080"/><rect x="95" y="629" width="1" height="11" fill="#808080"/><rect x="105" y="629" width="1" height="25" fill="#808080"/><rect x="115" y="629" width="1" height="11" fill="#808080"/><rect x="125" y="629" width="1" height="11" fill="#808080"/><rect x="136" y="629" width="1" height="11" fill="#808080"/><rect x="146" y="629" width="1" height="11" fill="#808080"/><rect x="156" y="629" width="1" height="25" fill="#808080"/><rect x="166" y="629" width="1" height="11" fill="#808080"/><rect x="176" y="629" width="1" height="11" fill="#808080"/><rect x="187" y="629" width="1" height="11" fill="#808080"/><rect x="197" y="629" width="1" height="11" fill="#808080"/><rect x="207" y="629" width="1" height="25" fill="#808080"/><rect x="217" y="629" width="1" height="11" fill="#808080"/><rect x="227" y="629" width="1" height="11" fill="#808080"/><rect x="238" y="629" width="1" height="11" fill="#808080"/><rect x="248" y="629" width="1" height="11" fill="#808080"/><rect x="258" y="629" width="1" height="25" fill="#808080"/><rect x="268" y="629" width="1" height="11" fill="#808080"/><rect x="278" y="629" width="1" height="11" fill="#808080"/><rect x="289" y="629" width="1" height="11" fill="#808080"/><rect x="299" y="629" width="1" height="11" fill="#808080"/><rect x="309" y="629" width="1" height="25" fill="#808080"/><rect x="319" y="629" width="1" height="11" fill="#808080"/><rect x="330" y="629" width="1" height="11" fill="#808080"/><rect x="340" y="629" width="1" height="11" fill="#808080"/><rect x="350" y="629" width="1" height="11" fill="#808080"/><rect x="360" y="629" width="1" height="25" fill="#808080"/><rect x="370" y="629" width="1" height="11" fill="#808080"/><rect x="381" y="629" width="1" height="11" fill="#808080"/><rect x="391" y="629" width="1" height="11" fill="#808080"/><rect x="401" y="629" width="1" height="11" fill="#808080"/><rect x="411" y="629" width="1" height="25" fill="#808080"/><rect x="421" y="629" width="1" height="11" fill="#808080"/><rect x="432" y="629" width="1" height="11" fill="#808080"/><rect x="442" y="629" width="1" height="11" fill="#808080"/><rect x="452" y="629" width="1" height="11" fill="#808080"/><rect x="462" y="629" width="1" height="25" fill="#808080"/><rect x="472" y="629" width="1" height="11" fill="#808080"/><rect x="483" y="629" width="1" height="11" fill="#808080"/><rect x="493" y="629" width="1" height="11" fill="#808080"/><rect x="503" y="629" width="1" height="11" fill="#808080"/><rect x="513" y="629" width="1" height="25" fill="#808080"/><rect x="523" y="629" width="1" height="11" fill="#808080"/><rect x="534" y="629" width="1" height="11" fill="#808080"/><rect x="544" y="629" width="1" height="11" fill="#808080"/><rect x="554" y="629" width="1" height="11" fill="#808080"/><rect x="564" y="629" width="1" height="25" fill="#808080"/><rect x="50" y="629" width="9" height="25" fill="#6f9cc8" fill-opacity="0.72" stroke="none"/><rect x="50.5" y="629.5" width="8" height="24" fill="none" stroke="#5b86b4" stroke-width="1"/><g shape-rendering="auto" fill="none" stroke="#000" stroke-width="1.2"><rect x="14.6" y="633.6" width="16" height="4.6" fill="#e8e8e8"/><path d="M16 636.500 C18 634 20 634 22.500 636 S 27 638 29.500 635.500" stroke-width="0.9"/><path d="M19 645.500 V640 M16.800 642.300 L19 640 L21.200 642.300 M26.500 640 V645.500 M24.300 643.200 L26.500 645.500 L28.700 643.200" stroke-width="1.1"/><rect x="14.6" y="646.600" width="16" height="2.300" fill="#e8e8e8"/></g></svg>
<div class="t tk" id="tk0" style="left:51px;top:641px;color:#0a2a5a">0</div>
<div class="t tk" id="tk10" style="left:100px;top:641px;color:#000">10</div>
<div class="t tk" id="tk20" style="left:151px;top:641px;color:#000">20</div>
<div class="t tk" id="tk30" style="left:201px;top:641px;color:#000">30</div>
<div class="t tk" id="tk40" style="left:252px;top:641px;color:#000">40</div>
<div class="t tk" id="tk50" style="left:303px;top:641px;color:#000">50</div>
<div class="t tk" id="tk60" style="left:354px;top:641px;color:#000">60</div>
<div class="t tk" id="tk70" style="left:405px;top:641px;color:#000">70</div>
<div class="t tk" id="tk80" style="left:456px;top:641px;color:#000">80</div>
<div class="t tk" id="tk90" style="left:507px;top:641px;color:#000">90</div>
<div class="t tk" id="tk100" style="left:555px;top:641px;color:#000">100</div>
<div class="abs" style="left:3px;top:657px;width:35px;height:21px;background:#e0c4c4;border:1px solid;border-color:#8c8c8c #f2f2f2 #f2f2f2 #8c8c8c"></div>
<div class="abs" style="left:3px;top:680px;width:35px;height:21px;background:#fff;border:1px solid;border-color:#9a9a9a #f2f2f2 #f2f2f2 #9a9a9a"></div>
<div class="abs" style="left:14px;top:691px;width:1px;height:2px;background:#6a9ae0"></div>
<div class="abs" style="left:42px;top:656px;width:3px;height:48px;border-left:1px solid #f0f0f0;border-right:1px solid #8a8a8a;background:#c6c6c6"></div>
<div class="sunk" style="left:47px;top:658px;width:49px;height:20px;background:#c6c6c6;border-color:#777 #f4f4f4 #f4f4f4 #777"></div>
<div class="t" id="tnone" style="left:53px;top:662px">None Se</div>
<svg class="ico" style="left:104px;top:660px" width="12" height="14" viewBox="104 660 12 14"><path d="M106.500 666 V663.500 C106.500 660.500 111.500 660.500 111.500 663.500 V666" fill="none" stroke="#808080" stroke-width="1.300"/><rect x="104.800" y="665.800" width="8.600" height="7" fill="#9a9a9a" stroke="#787878" stroke-width="0.800"/><path d="M105 668 H113.500 M105 670 H113.500" stroke="#dcdcdc" stroke-width="0.800"/></svg>
<svg class="ico" style="left:129px;top:659px" width="17" height="17" viewBox="129 659 17 17"><rect x="130" y="660.500" width="14" height="14" fill="#d8d8d8" stroke="#000" stroke-width="1"/><path d="M137 660.500 V664.500 M137 670.500 V674.500 M130 667.500 H134 M140 667.500 H144" stroke="#000" stroke-width="1"/><circle cx="137" cy="667.500" r="2" fill="#000"/></svg>
<div class="t" id="tX" style="left:152px;top:662px">X:</div>
<div class="sunk2" style="left:163px;top:658px;width:56px;height:20px;background:#e0e0e0;border-width:2px 1px 1px 2px;border-color:#111 #f0f0f0 #f0f0f0 #111"></div>
<div class="t" id="tY" style="left:234px;top:662px">Y:</div>
<div class="sunk2" style="left:245px;top:658px;width:56px;height:20px;background:#e0e0e0;border-width:2px 1px 1px 2px;border-color:#111 #f0f0f0 #f0f0f0 #111"></div>
<div class="t" id="tZ" style="left:316px;top:662px">Z:</div>
<div class="sunk2" style="left:327px;top:658px;width:34px;height:20px;background:#e0e0e0;border-width:2px 1px 1px 2px;border-color:#111 #e0e0e0 #f0f0f0 #111"></div>
<div class="sunk" style="left:47px;top:683px;width:313px;height:22px;background:#c6c6c6;border-color:#777 #f4f4f4 #f4f4f4 #777"></div>
<div class="t" id="tprompt" style="left:53px;top:687px">Click or click-and-drag to select objects</div>
<div class="btn" style="left:360px;top:655px;width:44px;height:50px;background:#c6c6c6;border-color:#f0f0f0 #8a8a8a #8a8a8a #f0f0f0"></div>
<svg class="ico" style="left:366px;top:671px" width="30" height="14" viewBox="366 671 30 14"><circle cx="374" cy="679" r="3.600" fill="none" stroke="#000" stroke-width="1.800"/><path d="M377.500 678.500 H393 M390.800 678.500 V683 M387.300 678.500 V682" stroke="#000" stroke-width="1.800" fill="none"/></svg>
<div class="abs" style="left:404px;top:656px;width:2px;height:48px;border-left:1px solid #8a8a8a;border-right:1px solid #f0f0f0"></div>
<div class="btn" style="left:407px;top:658px;width:47px;height:21px;background:#c8c8c8;border-color:#eee #7c7c7c #7c7c7c #eee"></div>
<div class="t" id="tauto" style="left:409px;top:663px">Auto Key</div>
<div class="btn" style="left:407px;top:679px;width:47px;height:22px;background:#c8c8c8;border-color:#eee #7c7c7c #7c7c7c #eee"></div>
<div class="t" id="tset" style="left:412px;top:685px">Set Key</div>
<div class="sunk2" style="left:458px;top:658px;width:114px;height:20px;background:#e2e2e2;border-width:2px 1px 1px 2px;border-color:#6e7478 #f4f4f4 #f4f4f4 #6e7478"></div>
<div class="t" id="tsel" style="left:461px;top:662px">Selected</div>
<div class="btn" style="left:555px;top:660px;width:16px;height:17px;background:#e6e6e6;border-color:#fff #777 #777 #fff"></div>
<svg class="ico" style="left:559px;top:667px" width="7" height="4"><path d="M0 0 H7 L3.500 4 Z" fill="#000"/></svg>
<svg class="ico" style="left:458px;top:680px" width="22" height="22" viewBox="458 680 22 22"><path d="M467 685 H475.600 M460.600 697 H470" stroke="#7878d8" stroke-width="1.300"/><path d="M461 690.600 L465 697 L470.600 685 L474.800 690.600" fill="none" stroke="#e02030" stroke-width="1.300" stroke-linejoin="round"/><path d="M474.500 700.500 H478 V697 Z" fill="#000"/><path d="M473.500 700.500 L478 696" stroke="#fff" stroke-width="0.900"/></svg>
<div class="btn" style="left:484px;top:681px;width:89px;height:20px;background:#c8c8c8"></div>
<div class="t" id="tkf" style="left:500px;top:685px">Key Filters...</div>
<svg class="ico" style="left:578px;top:656px" width="128" height="48" viewBox="578 656 128 48"><g fill="#000"><rect x="581.500" y="663" width="1.800" height="9"/><path d="M590 663 V672 L584 667.500 Z M597 663 V672 L591 667.500 Z"/><rect x="602" y="660" width="1" height="16" fill="#8a8a8a"/><rect x="603" y="660" width="1" height="16" fill="#efefef"/><path d="M615.500 663 V672 L609 667.500 Z"/><rect x="617" y="664" width="1.600" height="7"/><rect x="620" y="664" width="1.600" height="7"/><rect x="630.500" y="660.500" width="15" height="14" fill="#d0d0d0" stroke="#000" stroke-width="2"/><path d="M635.500 663.500 V671.500 L642 667.500 Z"/><path d="M645 677 H648 V674 Z"/><rect x="654" y="664" width="1.600" height="7"/><rect x="657" y="664" width="1.600" height="7"/><path d="M660 663 V672 L666.500 667.500 Z"/><rect x="674" y="660" width="1" height="16" fill="#8a8a8a"/><rect x="675" y="660" width="1" height="16" fill="#efefef"/><path d="M679 663 V672 L685 667.500 Z M686 663 V672 L692 667.500 Z"/><rect x="693" y="663" width="1.800" height="9"/><rect x="703" y="658" width="1" height="44" fill="#8a8a8a"/><rect x="704" y="658" width="1" height="44" fill="#efefef"/><rect x="584" y="685" width="1.400" height="9"/><rect x="593.600" y="685" width="1.400" height="9"/><path d="M589.300 686 V693 L585.500 689.500 Z M589.700 686 V693 L593.500 689.500 Z"/><rect x="685.500" y="683.500" width="9" height="9" fill="#d8d8d8" stroke="#000" stroke-width="1"/><rect x="685" y="683" width="10" height="2.500"/><circle cx="693.500" cy="691.500" r="4" fill="#e4e4e4" stroke="#a01010" stroke-width="1.200"/><path d="M693.500 689 V691.500 H695.500" stroke="#a01010" stroke-width="1" fill="none"/><path d="M673.500 684 L676.500 688 H670.500 Z M673.500 697 L676.500 693 H670.500 Z"/></g></svg>
<div class="sunk2" style="left:604px;top:681px;width:63px;height:19px;background:#e0e0e0;border-width:2px 1px 1px 2px;border-color:#555 #f4f4f4 #f4f4f4 #555"></div>
<div class="t" id="tf0" style="left:609px;top:684px">0</div>
<div class="abs" style="left:618px;top:653px;width:181px;height:1px;background:#6e6e6e"></div>
<svg class="ico" style="left:705px;top:655px" width="96" height="49" viewBox="705 655 96 49">
<defs><g id="fly2"><path d="M0 4 H4 V0 Z" fill="#000"/><path d="M-1.200 4 L3.500 -0.700" stroke="#fff" stroke-width="0.900"/></g></defs>
<circle cx="713.500" cy="665.500" r="4.300" fill="#e4e4ec" stroke="#1c1c8c" stroke-width="1.400"/><path d="M716.800 668.800 L722 674" stroke="#1c1c8c" stroke-width="2.400"/><path d="M717.500 669 L722.500 673.500" stroke="#7070e0" stroke-width="0.700"/>
<path d="M734.500 659.500 H746.500 V670.500 H734.500 Z M740.500 659.500 V670.500 M734.500 665 H746.500" fill="none" stroke="#a01824" stroke-width="1.200"/>
<circle cx="734.500" cy="669" r="3.600" fill="#e4e4ec" stroke="#1c1c8c" stroke-width="1.300"/><path d="M737 671.800 L741 675.500" stroke="#1c1c8c" stroke-width="2.200"/>
<path d="M754 662 V659.500 H757 M767 659.500 H769.500 V662 M769.500 671 V673.500 H767 M757 673.500 H754 V671" fill="none" stroke="#000" stroke-width="1.400"/>
<path d="M756.500 663.500 H764.500 V671.500 H756.500 Z" fill="#d0d0d0" stroke="#1c1c8c" stroke-width="1.200"/><path d="M756.500 663.500 L759.500 660.500 H767.500 L764.500 663.500 Z" fill="#f4f4f4" stroke="#1c1c8c" stroke-width="1"/><path d="M764.500 663.500 L767.500 660.500 V668.500 L764.500 671.500 Z" fill="#8c8c8c" stroke="#1c1c8c" stroke-width="1"/>
<use href="#fly2" x="769" y="672"/>
<path d="M781.500 659.500 H793.500 V670.500 H781.500 Z M787.500 659.500 V670.500 M781.500 665 H793.500" fill="none" stroke="#a01824" stroke-width="1.200"/>
<path d="M777.500 667.500 H784.500 V674.500 H777.500 Z" fill="#d0d0d0" stroke="#1c1c8c" stroke-width="1.200"/><path d="M777.500 667.500 L780 665 H787 L784.500 667.500 Z" fill="#f0f0f0" stroke="#1c1c8c" stroke-width="1"/><path d="M784.500 667.500 L787 665 V672 L784.500 674.500 Z" fill="#bcbcbc" stroke="#1c1c8c" stroke-width="1"/>
<use href="#fly2" x="792" y="672"/>
<rect x="709" y="682.500" width="15" height="14" fill="#e0e0e0" stroke="#000" stroke-width="1.300" stroke-dasharray="2.500 1.500"/>
<circle cx="714.500" cy="687.500" r="3.500" fill="#e8e8f0" stroke="#1c1c8c" stroke-width="1.300"/><path d="M717 690.300 L721 694.200" stroke="#1c1c8c" stroke-width="2.200"/>
<path d="M733.500 690.500 L731.500 688 C730.500 686.500 732.500 685.500 733.500 687 L735 689 L734.500 684.500 C734.300 682.500 736.500 682.500 736.800 684.200 L737.500 687.500 L737.800 683 C738 681.300 740.200 681.500 740.200 683.200 L740.200 687.500 L741.300 683.800 C741.800 682.200 743.800 682.800 743.500 684.500 L742.800 688.500 L744.200 686.500 C745.200 685.200 746.800 686.200 746 687.800 L744 692.500 C743.500 695 742 697 739.500 697 C736.500 697 735 694.500 733.500 690.500 Z" fill="#e8e8e8" stroke="#000" stroke-width="1" stroke-linejoin="round"/>
<g fill="#888"><rect x="736" y="690" width="1" height="1"/><rect x="738" y="692" width="1" height="1"/><rect x="740" y="690" width="1" height="1"/><rect x="737" y="694" width="1" height="1"/><rect x="741" y="693" width="1" height="1"/><rect x="739" y="688" width="1" height="1"/></g>
<circle cx="762" cy="690.500" r="4.800" fill="#c8c8c8" stroke="#000" stroke-width="1.200"/>
<path d="M762 682.500 V691 L768.500 691 M762 691 L756 697" fill="none" stroke="#1c1c8c" stroke-width="1.400"/><path d="M762 680.500 L764.300 684 H759.700 Z M770.500 691 L767 688.700 V693.300 Z M754.500 698.500 L755.500 694.500 L758.500 697.500 Z" fill="#000"/>
<use href="#fly2" x="769" y="694.500"/>
<rect x="778.500" y="682.500" width="11" height="11" fill="#c6c6c6" stroke="#1c1c8c" stroke-width="1.300"/><rect x="786.500" y="690.500" width="6" height="6" fill="#c6c6c6" stroke="#000" stroke-width="1.200"/>
<path d="M781.500 685.500 L787.500 691.500" stroke="#000" stroke-width="1" stroke-dasharray="1.500 1"/><path d="M780.500 684.500 H784 L780.500 688 Z" fill="#000"/>
</svg>
</body></html>
